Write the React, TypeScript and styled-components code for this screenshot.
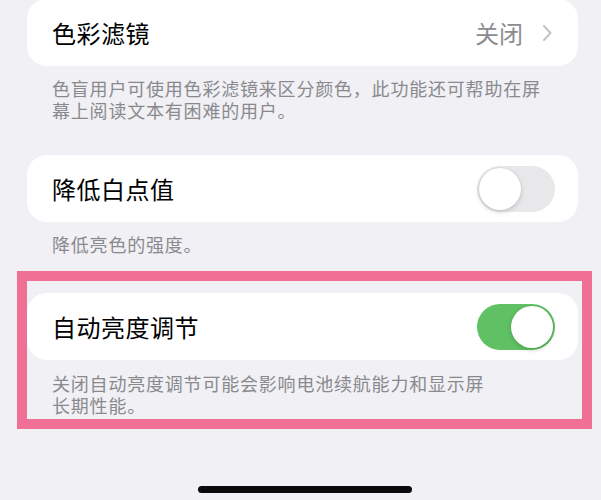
import styled, { createGlobalStyle } from 'styled-components';

const GlobalStyle = createGlobalStyle`
  html, body {
    margin: 0;
    padding: 0;
    background: #f0f0f5;
    overflow: hidden;
  }
  body {
    font-family: 'Noto Sans CJK SC', 'Noto Sans', sans-serif;
    -webkit-font-smoothing: antialiased;
  }
`;

interface SwitchProps {
  on?: boolean;
}

function Switch({ on }: SwitchProps) {
  return (
    <StyledSwitchTrack $on={!!on}>
      <StyledSwitchKnob $on={!!on} />
    </StyledSwitchTrack>
  );
}

function Chevron() {
  return (
    <svg width="12" height="18" viewBox="0 0 12 18">
      <path d="M3 2 L9.5 9 L3 16" fill="none" stroke="#c6c6ca" strokeWidth="2.2" strokeLinecap="round" strokeLinejoin="round" />
    </svg>
  );
}

export default function App() {
  return (
    <>
      <GlobalStyle />
      <StyledPage>
        <StyledGroup $first>
          <StyledCard>
            <StyledLabel>色彩滤镜</StyledLabel>
            <StyledValue>
              关闭
              <Chevron />
            </StyledValue>
          </StyledCard>
          <StyledFooter>
            <StyledFooterLine>色盲用户可使用色彩滤镜来区分颜色，此功能还可帮助在屏</StyledFooterLine>
            <StyledFooterLine>幕上阅读文本有困难的用户。</StyledFooterLine>
          </StyledFooter>
        </StyledGroup>

        <StyledGroup>
          <StyledCard>
            <StyledLabel>降低白点值</StyledLabel>
            <Switch />
          </StyledCard>
          <StyledFooter>
            <StyledFooterLine>降低亮色的强度。</StyledFooterLine>
          </StyledFooter>
        </StyledGroup>

        <StyledHighlight>
          <StyledCard>
            <StyledLabel>自动亮度调节</StyledLabel>
            <Switch on />
          </StyledCard>
          <StyledFooter>
            <StyledFooterLine>关闭自动亮度调节可能会影响电池续航能力和显示屏</StyledFooterLine>
            <StyledFooterLine>长期性能。</StyledFooterLine>
          </StyledFooter>
        </StyledHighlight>

        <StyledHomeBar />
      </StyledPage>
    </>
  );
}

const StyledPage = styled.div`
  display: flex;
  flex-direction: column;
  width: 601px;
  height: 500px;
  box-sizing: border-box;
  padding: 0 23px 0 27px;
  background: #f0f0f5;
`;

const StyledGroup = styled.section<{ $first?: boolean }>`
  display: flex;
  flex-direction: column;
  margin-top: ${(p) => (p.$first ? '-1px' : '34px')};
`;

const StyledCard = styled.div`
  display: flex;
  align-items: center;
  justify-content: space-between;
  height: 67px;
  box-sizing: border-box;
  padding: 0 23px 0 25px;
  background: #ffffff;
  border-radius: 20px;
`;

const StyledLabel = styled.span`
  font-size: 24px;
  line-height: 30px;
  color: #000000;
  letter-spacing: 0.5px;
`;

const StyledValue = styled.span`
  display: flex;
  align-items: center;
  gap: 18px;
  font-size: 24px;
  line-height: 30px;
  color: #8c8c90;
  margin-right: 2px;
`;

const StyledFooter = styled.div`
  display: flex;
  flex-direction: column;
  padding: 11px 0 0 25px;
  color: #8a8a8e;
`;

const StyledFooterLine = styled.span`
  height: 22px;
  font-size: 18px;
  line-height: 22px;
  letter-spacing: 0.8px;
  white-space: nowrap;
`;

const StyledHighlight = styled.section`
  display: flex;
  flex-direction: column;
  margin: 16px -14px 0 -10px;
  padding: 12px 4px 3px 0;
  border: 10px solid #f06f94;
  background: #f0f0f5;

  ${StyledFooter} {
    padding-top: 12px;
  }
`;

const StyledSwitchTrack = styled.div<{ $on: boolean }>`
  position: relative;
  width: 78px;
  height: 46px;
  border-radius: 23px;
  background: ${(p) => (p.$on ? '#5fc163' : '#e8e8ea')};
  flex-shrink: 0;
`;

const StyledSwitchKnob = styled.div<{ $on: boolean }>`
  position: absolute;
  top: 2px;
  left: ${(p) => (p.$on ? '34px' : '2px')};
  width: 42px;
  height: 42px;
  border-radius: 50%;
  background: #ffffff;
  box-shadow: 0 2px 5px rgba(0, 0, 0, 0.16), 0 0 0 0.5px rgba(0, 0, 0, 0.06);
`;

const StyledHomeBar = styled.div`
  align-self: center;
  width: 214px;
  height: 7px;
  margin: 57px 0 0 4px;
  border-radius: 4px;
  background: #0a0a0a;
`;
